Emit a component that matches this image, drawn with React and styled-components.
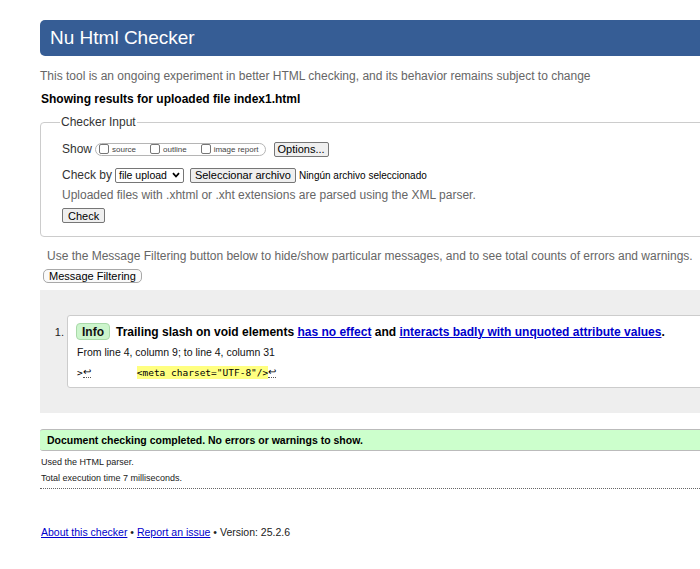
import React from "react";
import styled, { createGlobalStyle } from "styled-components";

const Global = createGlobalStyle`
  html, body { margin: 0; padding: 0; background: #fff; overflow: hidden; }
  body { font-family: "Liberation Sans", Arial, sans-serif; color: #000; }
`;

const Page = styled.div`
  width: 760px;
  padding: 20px 0 0 40px;
`;

const Header = styled.h1`
  margin: 0;
  height: 36px;
  display: flex;
  align-items: center;
  padding-left: 10px;
  background: #365d95;
  color: #fff;
  font-size: 19px;
  font-weight: normal;
  border-radius: 5px 0 0 5px;
`;

const Intro = styled.p`
  margin: 12px 0 0;
  font-size: 12px;
  line-height: 16px;
  color: #666;
`;

const ResultsFor = styled.p`
  margin: 7px 0 0 1px;
  font-size: 12px;
  line-height: 16px;
  font-weight: bold;
`;

const Fieldset = styled.fieldset`
  margin: 7px 0 0;
  padding: 9px 0 13px 21px;
  border: 1px solid #ccc;
  border-radius: 4px 0 0 4px;
  min-width: 0;
`;

const Legend = styled.legend`
  margin-left: -2px;
  padding: 0 1px;
  font-size: 12px;
  line-height: 16px;
  color: #333;
`;

const Row = styled.div`
  display: flex;
  align-items: center;
  height: 20px;
  margin-top: ${(p) => p.$mt || 0}px;
  font-size: 12px;
  color: #333;
`;

const Label = styled.span`
  margin-right: 3px;
`;

const CheckGroup = styled.span`
  display: inline-flex;
  align-items: center;
  height: 11px;
  padding: 0 6px 0 3px;
  border: 1px solid #b5b5b5;
  border-radius: 7px;
  margin-right: 8px;
`;

const Box = styled.input`
  appearance: none;
  width: 10px;
  height: 10px;
  margin: 0 3px 0 0;
  border: 1px solid #767676;
  border-radius: 2px;
  background: #fff;
`;

const BoxLabel = styled.label`
  display: inline-flex;
  align-items: center;
  font-size: 8px;
  color: #444;
  margin-right: ${(p) => (p.$last ? 0 : 14)}px;
`;

const Button = styled.button`
  font-family: "Liberation Sans", Arial, sans-serif;
  font-size: ${(p) => p.$fs || 11}px;
  line-height: 12px;
  height: ${(p) => (p.$round ? 14 : 15)}px;
  padding: 0 ${(p) => p.$px || 5}px;
  margin: 0;
  color: #000;
  background: ${(p) => (p.$round ? "#fafafa" : "#efefef")};
  border: 1px solid ${(p) => (p.$round ? "#a8a8a8" : "#767676")};
  border-radius: ${(p) => (p.$round ? 5 : 2)}px;
`;

const Select = styled.span`
  display: inline-flex;
  align-items: center;
  height: 13px;
  padding: 0 3px 0 3px;
  margin: 0 6px 0 0;
  border: 1px solid #767676;
  border-radius: 2px;
  font-size: 10.5px;
  color: #000;
  gap: 5px;
`;

const NoFile = styled.span`
  font-size: 10px;
  color: #000;
  margin-left: 3px;
`;

const Note = styled.p`
  margin: 2px 0 0;
  font-size: 12px;
  line-height: 16px;
  color: #666;
`;

const CheckRow = styled.div`
  margin-top: 5px;
  display: flex;
`;

const FilterNote = styled.p`
  margin: 11px 0 0 7px;
  font-size: 12px;
  line-height: 16px;
  color: #666;
`;

const FilterRow = styled.div`
  margin: 5px 0 0 3px;
  display: flex;
`;

const Results = styled.div`
  margin-top: 7px;
  background: #eee;
  padding: 25px 0 25px;
`;

const List = styled.ol`
  margin: 0;
  padding: 0 0 0 27px;
  font-size: 11px;
  color: #222;
`;

const Card = styled.li`
  background: #fff;
  border: 1px solid #ccc;
  border-radius: 3px 0 0 3px;
  padding: 7px 0 7px 9px;
`;

const MsgLine = styled.p`
  margin: 0;
  display: flex;
  align-items: center;
  height: 17px;
  font-size: 12px;
  font-weight: bold;
  color: #000;
  white-space: pre;
`;

const Badge = styled.span`
  display: inline-flex;
  align-items: center;
  height: 15px;
  padding: 0 5px;
  margin: 0 6px 0 -1px;
  background: #ccf5cc;
  border: 1px solid #a9d9a9;
  border-radius: 4px;
  font-weight: bold;
  color: #111;
`;

const Link = styled.a`
  color: #0000cc;
  text-decoration: underline;
`;

const Location = styled.p`
  margin: 5px 0 0;
  font-size: 10.5px;
  line-height: 14px;
  color: #111;
`;

const Extract = styled.p`
  margin: 5px 0 0;
  display: flex;
  align-items: center;
  height: 16px;
  font-family: "DejaVu Sans Mono", "Liberation Mono", monospace;
  font-size: 9.5px;
  color: #000;
`;

const Lf = styled.span`
  border-bottom: 1px dotted #555;
  line-height: 11px;
  font-family: "Liberation Sans", Arial, sans-serif;
  font-size: 10px;
`;

const Mark = styled.mark`
  background: #ffff80;
  color: #000;
  margin-left: ${(p) => p.$ml || 0}px;
  padding: 1px 0;
`;

const Success = styled.p`
  margin: 16px 0 0;
  height: 20px;
  display: flex;
  align-items: center;
  padding-left: 7px;
  background: #ccffcc;
  border-top: 1px solid #bbb;
  border-bottom: 1px solid #bbb;
  border-radius: 3px 0 0 3px;
  font-size: 10.5px;
  font-weight: bold;
  color: #000;
`;

const Details = styled.div`
  padding: 3px 0 2px 1px;
  border-bottom: 1px dotted #666;
  font-size: 9px;
  line-height: 16px;
  color: #222;
`;

const Footer = styled.p`
  margin: 35px 0 0 1px;
  font-size: 10.5px;
  line-height: 16px;
  color: #222;
`;

const Chevron = () => (
  <svg width="8" height="6" viewBox="0 0 8 6">
    <path d="M1 1.2 L4 4.5 L7 1.2" fill="none" stroke="#000" strokeWidth="1.8" />
  </svg>
);

export default function App() {
  return (
    <Page>
      <Global />
      <Header>Nu Html Checker</Header>
      <Intro>This tool is an ongoing experiment in better HTML checking, and its behavior remains subject to change</Intro>
      <ResultsFor>Showing results for uploaded file index1.html</ResultsFor>

      <Fieldset>
        <Legend>Checker Input</Legend>
        <Row>
          <Label>Show</Label>
          <CheckGroup>
            <BoxLabel><Box type="checkbox" />source</BoxLabel>
            <BoxLabel><Box type="checkbox" />outline</BoxLabel>
            <BoxLabel $last><Box type="checkbox" />image report</BoxLabel>
          </CheckGroup>
          <Button $px={3}>Options...</Button>
        </Row>
        <Row $mt={6}>
          <Label>Check by</Label>
          <Select>file upload <Chevron /></Select>
          <Button $px={4}>Seleccionar archivo</Button>
          <NoFile>Ningún archivo seleccionado</NoFile>
        </Row>
        <Note>Uploaded files with .xhtml or .xht extensions are parsed using the XML parser.</Note>
        <CheckRow>
          <Button $px={5}>Check</Button>
        </CheckRow>
      </Fieldset>

      <FilterNote>Use the Message Filtering button below to hide/show particular messages, and to see total counts of errors and warnings.</FilterNote>
      <FilterRow>
        <Button $round $px={5}>Message Filtering</Button>
      </FilterRow>

      <Results>
        <List>
          <Card>
            <MsgLine>
              <Badge>Info</Badge>
              Trailing slash on void elements <Link href="#">has no effect</Link> and <Link href="#">interacts badly with unquoted attribute values</Link>.
            </MsgLine>
            <Location>From line 4, column 9; to line 4, column 31</Location>
            <Extract>
              &gt;<Lf>↩</Lf>
              <Mark $ml={46}>&lt;meta charset="UTF-8"/&gt;</Mark>
              <Lf>↩</Lf>
            </Extract>
          </Card>
        </List>
      </Results>

      <Success>Document checking completed. No errors or warnings to show.</Success>
      <Details>
        <div>Used the HTML parser.</div>
        <div>Total execution time 7 milliseconds.</div>
      </Details>

      <Footer>
        <Link href="#">About this checker</Link> • <Link href="#">Report an issue</Link> • Version: 25.2.6
      </Footer>
    </Page>
  );
}
